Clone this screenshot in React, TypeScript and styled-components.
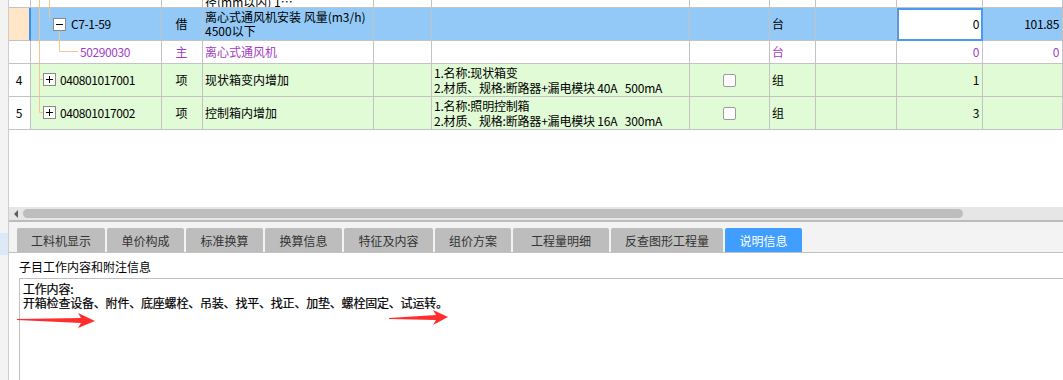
import React from "react";
import styled, { createGlobalStyle } from "styled-components";

const Global = createGlobalStyle`
  html, body { margin: 0; padding: 0; background: #fff; overflow: hidden; }
  body {
    font-family: "Noto Sans CJK SC", "Noto Sans", sans-serif;
    font-size: 12px;
    color: #000;
  }
`;

const COLS = "22px 131px 41px 171px 58px 258px 80px 46px 81px 86px 1fr";
const LINE = "#c3c3c3";
const BLUE = "#92c9f6";
const GREEN = "#e1fbd6";
const PEACH = "#ffe6c9";
const PURPLE = "#a43cc4";
const TREE = "#f5c68e";

const Page = styled.div`
  display: flex;
  width: 1063px;
  height: 380px;
  overflow: hidden;
`;

const LeftStrip = styled.div`
  width: 8px;
  flex: none;
  background: #f3f3f3;
  border-right: 1px solid #cdcdcd;
  display: flex;
  flex-direction: column;
  padding-top: 233px;
`;

const StripMark = styled.div`
  height: 22px;
  background: #dce9f8;
`;

const Main = styled.div`
  flex: 1;
  min-width: 0;
  display: flex;
  flex-direction: column;
`;

const GridArea = styled.div`
  height: 207px;
  flex: none;
  background: #fff;
  overflow: hidden;
`;

const Row = styled.div<{ $h: number }>`
  display: grid;
  grid-template-columns: ${COLS};
  height: ${(p) => p.$h}px;
`;

const Cell = styled.div<{
  $bg?: string;
  $justify?: string;
  $color?: string;
  $mark?: boolean;
  $focus?: boolean;
  $bottom?: boolean;
}>`
  display: flex;
  align-items: ${(p) => (p.$bottom ? "flex-end" : "center")};
  justify-content: ${(p) => p.$justify || "flex-start"};
  background: ${(p) => p.$bg || "#fff"};
  color: ${(p) => p.$color || "#000"};
  border-right: ${(p) => (p.$mark ? "2px solid #3f8ef0" : `1px solid ${LINE}`)};
  border-bottom: 1px solid ${LINE};
  overflow: hidden;
  white-space: pre;
  padding: 0 3px 0 2px;
  line-height: 14px;
  min-width: 0;
  ${(p) => (p.$focus ? "outline: 2px solid #4a9af5; outline-offset: -2px;" : "")}
`;

const CodeCell = styled(Cell)`
  padding: 0;
  align-items: stretch;
`;

const CodeLabel = styled.span<{ $color?: string }>`
  align-self: center;
  letter-spacing: -0.4px;
  color: ${(p) => p.$color || "#000"};
`;

const Clipped = styled.span`
  margin-bottom: -2px;
`;

const Lines = styled.div<{ $lh: number }>`
  display: flex;
  flex-direction: column;
  line-height: ${(p) => p.$lh}px;
`;

const Spec = styled.span`
  letter-spacing: -0.2px;
`;

const Check = styled.span`
  width: 13px;
  height: 13px;
  box-sizing: border-box;
  border: 1px solid #9c9c9c;
  border-radius: 2px;
  background: #fff;
`;

const Num = styled.span`
  letter-spacing: -0.3px;
`;

const HScroll = styled.div`
  height: 13px;
  flex: none;
  background: #e6e6e6;
  display: flex;
  align-items: center;
  padding-left: 5px;
  gap: 5px;
`;

const ScrollArrow = styled.div`
  width: 0;
  height: 0;
  border-top: 4px solid transparent;
  border-bottom: 4px solid transparent;
  border-right: 4px solid #5c5c5c;
`;

const Thumb = styled.div`
  width: 940px;
  height: 9px;
  border-radius: 5px;
  background: #bdbdbd;
`;

const TabBar = styled.div`
  height: 30px;
  flex: none;
  background: #f3f3f3;
  border-top: 2px solid #bcbcbc;
  border-bottom: 1px solid #c2c2c2;
  display: flex;
  align-items: flex-end;
  gap: 2px;
  padding-left: 8px;
`;

const Tab = styled.div<{ $w: number; $active?: boolean }>`
  width: ${(p) => p.$w}px;
  height: 24px;
  flex: none;
  display: flex;
  align-items: center;
  justify-content: center;
  border-radius: 2px 2px 0 0;
  background: ${(p) => (p.$active ? "#409eff" : "#bdbdbd")};
  color: ${(p) => (p.$active ? "#fff" : "#333")};
  font-size: 12px;
`;

const InfoPanel = styled.div`
  flex: 1;
  position: relative;
  background: #fff;
  display: flex;
  flex-direction: column;
`;

const InfoTitle = styled.div`
  padding: 6px 0 3px 10px;
  line-height: 16px;
`;

const InfoBox = styled.div`
  flex: 1;
  margin-left: 10px;
  border-top: 1px solid #c0c0c0;
  border-left: 1px solid #c0c0c0;
  padding: 3px 0 0 3px;
  line-height: 14px;
  white-space: pre;
  letter-spacing: -0.2px;
  -webkit-text-stroke: 0.2px #000;
`;

const ArrowLayer = styled.svg`
  position: absolute;
  left: 0;
  top: 0;
  pointer-events: none;
`;

type TreeKind = "top" | "parent" | "child" | "item" | "last";

const Tree: React.FC<{ kind: TreeKind; h: number }> = ({ kind, h }) => {
  const w = kind === "top" ? 40 : kind === "parent" ? 40 : kind === "child" ? 49 : 29;
  const box = (x: number, y: number, plus: boolean) => (
    <g>
      <rect x={x + 0.5} y={y + 0.5} width={12} height={12} fill="#fff" stroke="#8a8a8a" />
      <line x1={x + 3} y1={y + 6.5} x2={x + 10} y2={y + 6.5} stroke="#000" />
      {plus && <line x1={x + 6.5} y1={y + 3} x2={x + 6.5} y2={y + 10} stroke="#000" />}
    </g>
  );
  return (
    <svg width={w} height={h} style={{ flex: "none", display: "block" }}>
      {kind === "top" && (
        <g stroke={TREE}>
          <line x1={8.5} y1={0} x2={8.5} y2={h} />
          <line x1={18.5} y1={0} x2={18.5} y2={h} />
        </g>
      )}
      {kind === "parent" && (
        <g>
          <g stroke={TREE}>
            <line x1={8.5} y1={0} x2={8.5} y2={h} />
            <line x1={18.5} y1={0} x2={18.5} y2={10} />
            <line x1={28.5} y1={22} x2={28.5} y2={h} />
          </g>
          {box(22, 10, false)}
        </g>
      )}
      {kind === "child" && (
        <g stroke={TREE}>
          <line x1={8.5} y1={0} x2={8.5} y2={h} />
          <line x1={28.5} y1={0} x2={28.5} y2={10.5} />
          <line x1={28.5} y1={10.5} x2={47} y2={10.5} />
        </g>
      )}
      {(kind === "item" || kind === "last") && (
        <g>
          <g stroke={TREE}>
            <line x1={8.5} y1={0} x2={8.5} y2={kind === "item" ? h : 15.5} />
            <line x1={8.5} y1={15.5} x2={12.5} y2={15.5} />
          </g>
          {box(12, 9, true)}
        </g>
      )}
    </svg>
  );
};

const tabs: { label: string; w: number; active?: boolean }[] = [
  { label: "工料机显示", w: 88 },
  { label: "单价构成", w: 77 },
  { label: "标准换算", w: 77 },
  { label: "换算信息", w: 77 },
  { label: "特征及内容", w: 89 },
  { label: "组价方案", w: 76 },
  { label: "工程量明细", w: 96 },
  { label: "反查图形工程量", w: 112 },
  { label: "说明信息", w: 77, active: true },
];

const items = [
  {
    no: "4",
    code: "040801017001",
    name: "现状箱变内增加",
    f1: "1.名称:现状箱变",
    f2: "2.材质、规格:断路器+漏电模块 40A   500mA",
    qty: "1",
    kind: "item" as TreeKind,
  },
  {
    no: "5",
    code: "040801017002",
    name: "控制箱内增加",
    f1: "1.名称:照明控制箱",
    f2: "2.材质、规格:断路器+漏电模块 16A   300mA",
    qty: "3",
    kind: "last" as TreeKind,
  },
];

export default function App() {
  return (
    <Page>
      <Global />
      <LeftStrip>
        <StripMark />
      </LeftStrip>
      <Main>
        <GridArea>
          {/* partially scrolled-off row */}
          <Row $h={8}>
            <Cell />
            <CodeCell>
              <Tree kind="top" h={7} />
            </CodeCell>
            <Cell />
            <Cell $bottom>
              <Clipped>径(mm以内) 1…</Clipped>
            </Cell>
            <Cell />
            <Cell />
            <Cell />
            <Cell />
            <Cell />
            <Cell />
            <Cell />
          </Row>

          {/* selected quota row */}
          <Row $h={33}>
            <Cell $bg={PEACH} $mark />
            <CodeCell $bg={BLUE}>
              <Tree kind="parent" h={32} />
              <CodeLabel>C7-1-59</CodeLabel>
            </CodeCell>
            <Cell $bg={BLUE} $justify="center">借</Cell>
            <Cell $bg={BLUE}>
              <Lines $lh={14}>
                <span>离心式通风机安装 风量(m3/h)</span>
                <span>4500以下</span>
              </Lines>
            </Cell>
            <Cell $bg={BLUE} />
            <Cell $bg={BLUE} />
            <Cell $bg={BLUE} />
            <Cell $bg={BLUE}>台</Cell>
            <Cell $bg={BLUE} />
            <Cell $focus $justify="flex-end">
              <Num>0</Num>
            </Cell>
            <Cell $bg={BLUE} $justify="flex-end">
              <Num>101.85</Num>
            </Cell>
          </Row>

          {/* main material row */}
          <Row $h={23}>
            <Cell />
            <CodeCell>
              <Tree kind="child" h={22} />
              <CodeLabel $color={PURPLE}>50290030</CodeLabel>
            </CodeCell>
            <Cell $justify="center" $color={PURPLE}>主</Cell>
            <Cell $color={PURPLE}>离心式通风机</Cell>
            <Cell />
            <Cell />
            <Cell />
            <Cell $color={PURPLE}>台</Cell>
            <Cell />
            <Cell $justify="flex-end" $color={PURPLE}>
              <Num>0</Num>
            </Cell>
            <Cell $justify="flex-end" $color={PURPLE}>
              <Num>0</Num>
            </Cell>
          </Row>

          {items.map((it) => (
            <Row $h={33} key={it.no}>
              <Cell $justify="center">{it.no}</Cell>
              <CodeCell $bg={GREEN}>
                <Tree kind={it.kind} h={32} />
                <CodeLabel>{it.code}</CodeLabel>
              </CodeCell>
              <Cell $bg={GREEN} $justify="center">项</Cell>
              <Cell $bg={GREEN}>{it.name}</Cell>
              <Cell $bg={GREEN} />
              <Cell $bg={GREEN}>
                <Lines $lh={15}>
                  <Spec>{it.f1}</Spec>
                  <Spec>{it.f2}</Spec>
                </Lines>
              </Cell>
              <Cell $bg={GREEN} $justify="center">
                <Check />
              </Cell>
              <Cell $bg={GREEN}>组</Cell>
              <Cell $bg={GREEN} />
              <Cell $bg={GREEN} $justify="flex-end">
                <Num>{it.qty}</Num>
              </Cell>
              <Cell $bg={GREEN} />
            </Row>
          ))}
        </GridArea>

        <HScroll>
          <ScrollArrow />
          <Thumb />
        </HScroll>

        <TabBar>
          {tabs.map((t) => (
            <Tab key={t.label} $w={t.w} $active={t.active}>
              {t.label}
            </Tab>
          ))}
        </TabBar>

        <InfoPanel>
          <InfoTitle>子目工作内容和附注信息</InfoTitle>
          <InfoBox>
            {"工作内容:\n开箱检查设备、附件、底座螺栓、吊装、找平、找正、加垫、螺栓固定、试运转。"}
          </InfoBox>
          <ArrowLayer width={1054} height={127}>
            <polygon
              points="8,66 72,65 69,60 86,68 69,75 72,70 8,67"
              fill="#ff2d2d"
            />
            <polygon
              points="380,65 427,62 424,57 439,64 424,72 427,67 380,66"
              fill="#ff2d2d"
            />
          </ArrowLayer>
        </InfoPanel>
      </Main>
    </Page>
  );
}
